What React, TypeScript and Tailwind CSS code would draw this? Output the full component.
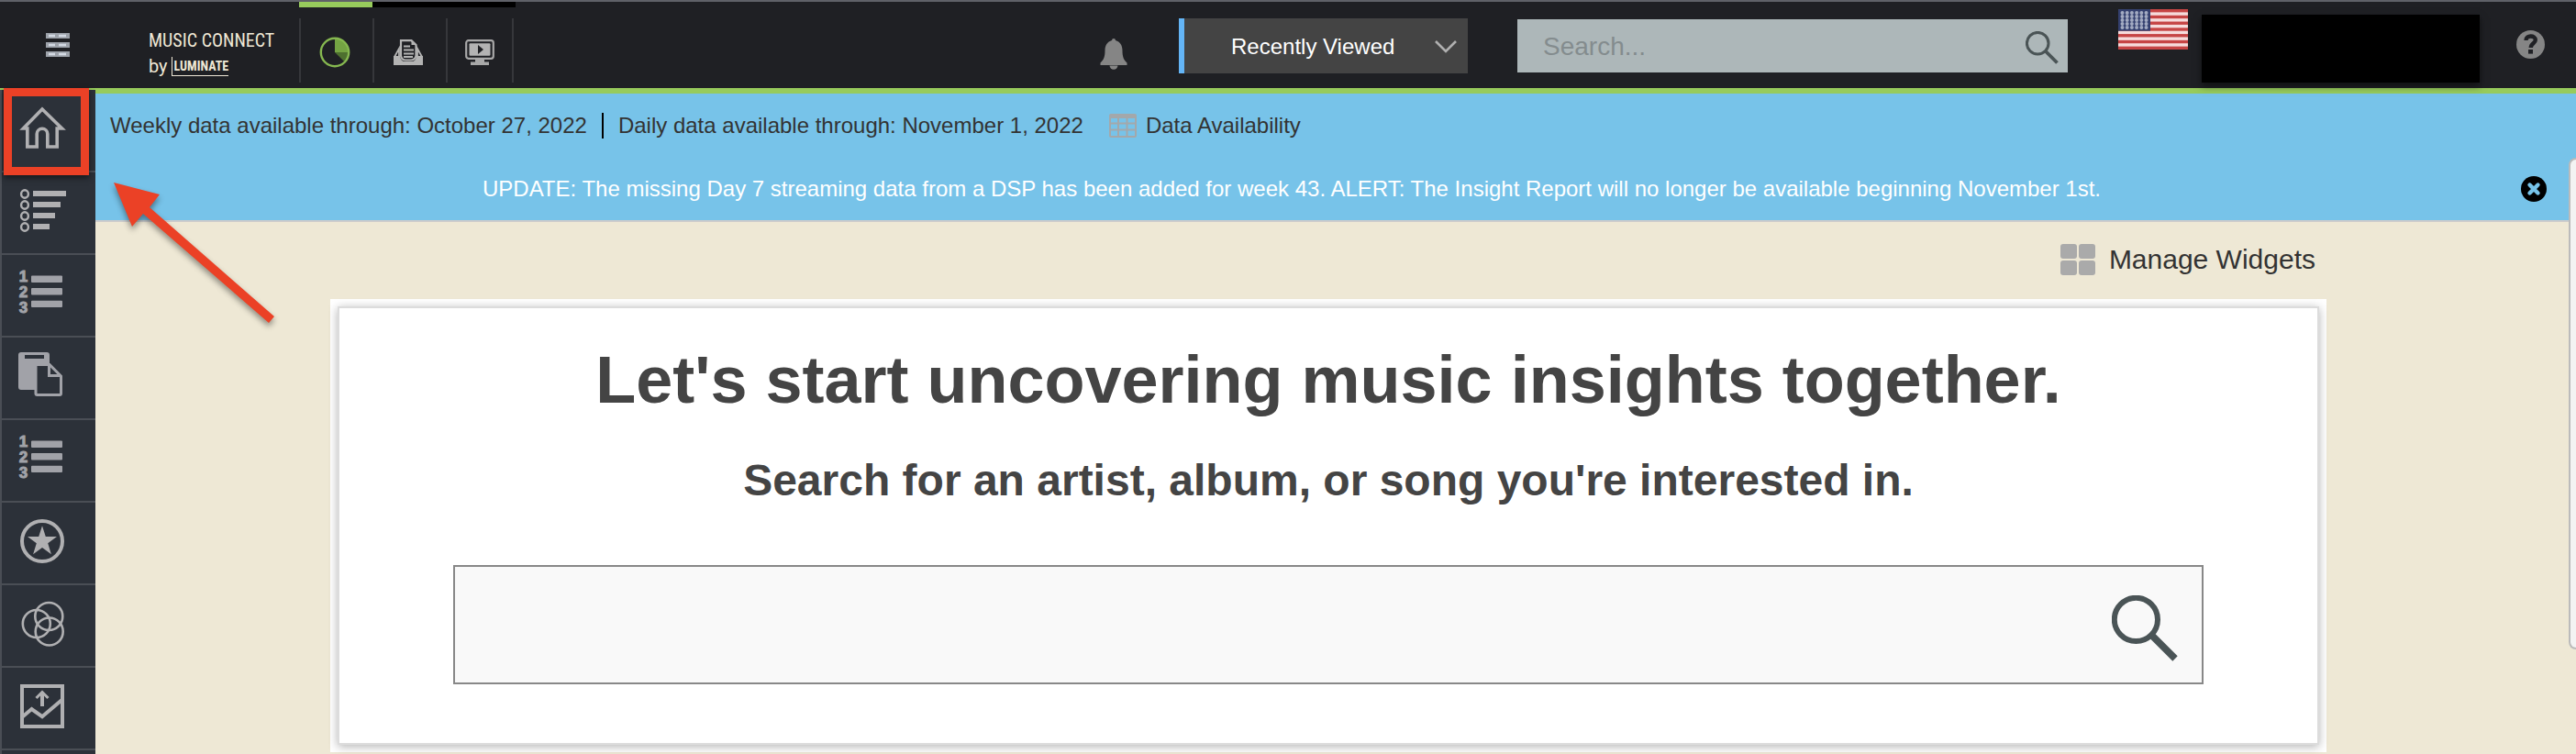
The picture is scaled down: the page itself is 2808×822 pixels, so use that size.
import type { ReactNode } from "react";

const sidebarItems: { label: string; icon: ReactNode }[] = [
  {
    label: "Home",
    icon: (
      <path
        d="M46 21 L25.5 42 H29.8 V62 H40.2 V48 a5.8 5.8 0 0 1 11.6 0 V62 H62.2 V42 H67.5 Z"
        fill="none"
        stroke="#b0b0b2"
        strokeWidth="3.6"
      />
    ),
  },
  {
    label: "Rankings",
    icon: (
      <g>
        {[36, 30, 24, 18].map((width, i) => (
          <g key={width}>
            <ellipse cx="27" cy={23.5 + i * 12} rx="3.9" ry="4.2" fill="none" stroke="#b0b0b2" strokeWidth="2.4" />
            <rect x="36" y={20 + i * 12} width={width} height="6" fill="#b0b0b2" />
          </g>
        ))}
      </g>
    ),
  },
  { label: "Charts", icon: <NumberedList /> },
  {
    label: "Reports",
    icon: (
      <g>
        <path d="M23 16 H51 a3 3 0 0 1 3 3 V30 H40 V57 H23 a3 3 0 0 1 -3 -3 V19 a3 3 0 0 1 3 -3 Z" fill="#a1a2a8" />
        <rect x="27" y="19" width="21" height="4" fill="#2c3139" />
        <path
          d="M39 29.5 H54 L66.5 42 V61 a1.5 1.5 0 0 1 -1.5 1.5 H40.5 a1.5 1.5 0 0 1 -1.5 -1.5 Z M53.5 29.5 V41.5 H66.5"
          fill="#2c3139"
          stroke="#a1a2a8"
          strokeWidth="3"
        />
      </g>
    ),
  },
  { label: "Top Lists", icon: <NumberedList /> },
  {
    label: "Favorites",
    icon: (
      <g>
        <circle cx="46" cy="42" r="22" fill="none" stroke="#b0b0b2" strokeWidth="4" />
        <path
          d="M46 25.3 L49.8 37 H62 L52.2 44.3 L55.9 56.3 L46 49 L36.1 56.3 L39.8 44.3 L30 37 H42.2 Z"
          fill="#b0b0b2"
        />
      </g>
    ),
  },
  {
    label: "Compare",
    icon: (
      <g fill="none" stroke="#b0b0b2" strokeWidth="2.6">
        <circle cx="39.8" cy="42" r="15" />
        <circle cx="53.3" cy="34" r="15" />
        <circle cx="53.7" cy="50.5" r="15" />
      </g>
    ),
  },
  {
    label: "Trends",
    icon: (
      <g fill="none" stroke="#b0b0b2" strokeWidth="4">
        <rect x="24" y="20" width="44" height="44" />
        <path d="M24.5 53.5 L34.5 45 L46 53.2 L67.5 35" />
        <path d="M46 42 V27" />
        <path d="M39.5 33 L46 26.5 L52.5 33" strokeWidth="3" />
      </g>
    ),
  },
];

function NumberedList() {
  return (
    <g fill="#a1a2a8">
      {[1, 2, 3].map((n, i) => (
        <g key={n}>
          <text
            x="25.5"
            y={29 + i * 17}
            textAnchor="middle"
            fontSize="17"
            fontWeight="700"
            stroke="#a1a2a8"
            fontFamily="'Liberation Sans', Arial, sans-serif"
          >
            {n}
          </text>
          <rect x="34" y={22.5 + i * 13.6} width="34" height="7.4" rx="1" />
        </g>
      ))}
    </g>
  );
}

function SearchIcon({ className }: { className: string }) {
  return (
    <svg viewBox="0 0 36 36" className={className} fill="none" stroke="#4a5456" strokeWidth="3">
      <circle cx="13.2" cy="13.2" r="11.8" />
      <path d="M21.5 21.5 L34.5 34.5" strokeWidth="3.8" />
    </svg>
  );
}

function Flag() {
  return (
    <svg viewBox="0 0 76 44" className="h-11 w-[76px]">
      <rect width="76" height="44" fill="#f6dcdc" />
      {[0, 1, 2, 3, 4, 5, 6].map((i) => (
        <rect key={i} y={i * 6.77} width="76" height="3.38" fill="#c64545" />
      ))}
      <rect width="35" height="23.7" fill="#34406f" />
      {[0, 1, 2, 3, 4].map((row) =>
        [0, 1, 2, 3, 4, 5].map((col) => (
          <circle key={`${row}-${col}`} cx={4.5 + col * 5.2} cy={4 + row * 4} r="2" fill="#a3abc2" />
        ))
      )}
    </svg>
  );
}

function Header() {
  return (
    <header className="flex items-start border-t-2 border-b-2 border-t-[#5f6168] border-b-[#97cb5c] bg-[#1f2024] pr-[34px] h-[98px]">
      <button aria-label="Menu" className="mt-[34px] ml-[50px]">
        <svg viewBox="0 0 26 26" className="block size-[26px]">
          {[0, 10, 20].map((y) => (
            <g key={y}>
              <rect y={y} width="26" height="6" fill="#9da2aa" />
              <path d={`M3 ${y + 3} H10 M14 ${y + 3} H22`} stroke="#d3d9e3" strokeWidth="2.5" />
            </g>
          ))}
        </svg>
      </button>

      <a href="#home" className="mt-7 ml-[86px] flex w-[164px] flex-col text-[#efe8d6]">
        <span className="font-['Liberation_Sans_Narrow','Roboto_Condensed',Roboto,sans-serif] text-xl leading-7 whitespace-nowrap">
          MUSIC CONNECT
        </span>
        <span className="flex items-center gap-1 font-['Roboto','Liberation_Sans',sans-serif] text-xl leading-7">
          by
          <span className="border-b border-l border-[#efe8d6] pl-[2px] font-['Liberation_Sans_Narrow','Roboto_Condensed',Roboto,sans-serif] text-sm leading-5 font-bold">
            LUMINATE
          </span>
        </span>
      </a>

      <nav className="flex">
        <a href="#insights" aria-label="Insights" className="w-20 border-t-6 border-[#97cb5c]">
          <span className="mt-3 flex h-[70px] items-center justify-center border-l-2 border-[#36373b] pt-1 pr-1">
            <svg viewBox="0 0 34 34" className="size-[34px]">
              <path d="M17 17 V2 A15 15 0 0 1 32 17 Z" fill="#74a343" />
              <path d="M17 17 H32 A15 15 0 0 1 27.6 27.6 Z" fill="#4e702f" />
              <circle cx="17" cy="17" r="15.2" fill="none" stroke="#86b850" strokeWidth="2.4" />
            </svg>
          </span>
        </a>
        <a href="#inbox" aria-label="Saved reports" className="w-20 border-t-6 border-black">
          <span className="mt-3 flex h-[70px] items-center justify-center border-l-2 border-[#36373b] pt-1 pr-1">
            <svg viewBox="0 0 32 28" className="h-7 w-8">
              <path d="M1 19 L6 10 V19 Z M31 19 L26 10 V19 Z" fill="none" stroke="#b3b3b3" strokeWidth="1.8" />
              <path d="M0 18 H7 Q8 24 12 24 H20 Q24 24 25 18 H32 V28 H0 Z" fill="#b3b3b3" />
              <path d="M8 18 V1.2 H19.5 L24.5 6 V18 Q23 22.5 19 22.5 H13 Q9 22.5 8 18 Z" fill="#1f2024" stroke="#b3b3b3" strokeWidth="2.2" />
              <path d="M19.5 1.2 V6 H24.5 Z" fill="#b3b3b3" />
              <path d="M11 7.5 H18 M11 11.5 H22 M11 15.5 H22 M11 19 H21" stroke="#b3b3b3" strokeWidth="2" />
            </svg>
          </span>
        </a>
        <a href="#videos" aria-label="Video" className="w-[76px] border-t-6 border-black">
          <span className="mt-3 mr-[2px] flex h-[70px] items-center justify-center border-x-2 border-[#36373b] pt-1">
            <svg viewBox="0 0 32 28" className="h-7 w-8">
              <rect x="1.2" y="1.2" width="29.6" height="19.6" rx="2.5" fill="#1f2024" stroke="#a8a8a8" strokeWidth="2.2" />
              <rect x="4.5" y="4.2" width="23" height="13.6" rx="1" fill="#b3b3b3" />
              <path d="M14 6 L20 11 L14 16 Z" fill="#1f2024" />
              <path d="M11 20 H21 V24.5 H26 V28 H6 V24.5 H11 Z" fill="#a8a8a8" />
            </svg>
          </span>
        </a>
      </nav>

      <div className="ml-auto flex items-start">
        <button aria-label="Notifications" className="mt-10 mr-14">
          <svg viewBox="0 0 30 34" className="block h-[34px] w-[30px]" fill="#858585">
            <path d="M15 0 a2 2 0 0 1 2 2 C22 3.5 24.5 7.5 24.5 13 C24.5 20 26 23.5 29.5 26.5 V29 H.5 V26.5 C4 23.5 5.5 20 5.5 13 C5.5 7.5 8 3.5 13 2 a2 2 0 0 1 2 -2 Z" />
            <path d="M10.5 29.5 H19.5 a4.5 4.2 0 0 1 -9 0 Z" />
          </svg>
        </button>

        <div className="relative mt-[18px] mr-[54px]">
          <select
            aria-label="Recently Viewed"
            className="block h-[60px] w-[315px] appearance-none border-l-6 border-[#64b5f6] bg-[#444] pt-[2px] pl-[51px] text-2xl text-white"
          >
            <option>Recently Viewed</option>
          </select>
          <svg
            viewBox="0 0 24 14"
            className="pointer-events-none absolute top-6 right-3 h-[14px] w-6"
            fill="none"
            stroke="#b0b0b0"
            strokeWidth="2.6"
          >
            <path d="M1 1 L12 12 L23 1" />
          </svg>
        </div>

        <div className="relative mt-[19px] mr-[55px]">
          <input
            type="text"
            aria-label="Search"
            placeholder="Search..."
            className="block h-[58px] w-[600px] bg-[#adb7b9] pt-[2px] pr-16 pl-7 text-[28px] text-[#444] placeholder:text-[#848c8e]"
          />
          <button aria-label="Submit search" className="absolute top-[13px] right-[10px]">
            <SearchIcon className="block size-9" />
          </button>
        </div>

        <button aria-label="Country" className="mt-2 mr-[15px]">
          <Flag />
        </button>
        <div className="z-10 mt-[14px] mr-10 h-[74px] w-[303px] bg-black shadow-[0_4px_8px_rgba(0,0,0,0.5)]" />
        <a href="#help" aria-label="Help" className="mt-[31px]">
          <svg viewBox="0 0 31 31" className="block size-[31px]">
            <circle cx="15.5" cy="15.5" r="15.5" fill="#858585" />
            <path d="M10.5 11 C10.5 4.8 20.8 5.2 20.8 10.5 C20.8 14.5 15.8 14.2 15.8 19" fill="none" stroke="#1f2024" strokeWidth="4.4" />
            <rect x="13" y="21" width="5" height="4.6" fill="#1f2024" />
          </svg>
        </a>
      </div>
    </header>
  );
}

function Sidebar() {
  return (
    <nav className="w-[104px] shrink-0 border-l-2 border-[#4a4e55] bg-[#2c3139]">
      {sidebarItems.map((item) => (
        <a
          key={item.label}
          href="#menu"
          aria-label={item.label}
          className="block border-b-2 border-[#4a4e55]"
        >
          <svg viewBox="2 0 102 88" className="block h-[88px] w-full">
            {item.icon}
          </svg>
        </a>
      ))}
    </nav>
  );
}

function NoticeBar() {
  return (
    <section className="border-b-2 border-[#ccc] bg-[#77c3e9] text-2xl">
      <div className="flex h-[70px] items-center pl-4 text-[#333]">
        <span>Weekly data available through: October 27, 2022</span>
        <span className="mx-4 h-7 w-[2px] bg-black" />
        <span>Daily data available through: November 1, 2022</span>
        <a href="#availability" className="ml-7 flex items-center gap-[10px]">
          <svg viewBox="0 0 30 26" className="h-[26px] w-[30px]" fill="none" stroke="#a3a8ab" strokeWidth="2">
            <rect x="1" y="1" width="28" height="24" rx="1" />
            <path d="M1 3 H29" strokeWidth="4" />
            <path d="M1 10.5 H29 M1 17.5 H29 M10 3 V25 M19.5 3 V25" />
          </svg>
          Data Availability
        </a>
      </div>
      <div className="flex h-[68px] items-center text-white">
        <p className="flex-1 text-center">
          UPDATE: The missing Day 7 streaming data from a DSP has been added for week 43. ALERT: The Insight
          Report will no longer be available beginning November 1st.
        </p>
        <button aria-label="Close" className="mr-8 ml-9">
          <svg viewBox="0 0 28 28" className="block size-7">
            <circle cx="14" cy="14" r="14" fill="#000" />
            <path d="M9.5 9.5 L18.5 18.5 M18.5 9.5 L9.5 18.5" stroke="#77c3e9" strokeWidth="4.4" strokeLinecap="round" />
          </svg>
        </button>
      </div>
    </section>
  );
}

function SearchWidget() {
  return (
    <section className="bg-white p-2">
      <div className="border-2 border-[#dcdcdc] bg-white px-31 pt-[38px] pb-16 text-center text-[#444] shadow-[0_2px_10px_rgba(0,0,0,0.3)]">
        <h1 className="text-7xl leading-[80px] font-bold">Let's start uncovering music insights together.</h1>
        <h2 className="mt-[42px] text-5xl leading-[56px] font-bold">
          Search for an artist, album, or song you're interested in.
        </h2>
        <div className="mt-16 flex h-[130px] items-center border-2 border-[#888] bg-[#f9f9f9] pr-[26px]">
          <input
            type="text"
            aria-label="Search for an artist, album, or song"
            className="h-full min-w-0 flex-1 px-6 text-5xl outline-none"
          />
          <button aria-label="Search" className="pt-2">
            <SearchIcon className="block size-[72px]" />
          </button>
        </div>
      </div>
    </section>
  );
}

// Red box and arrow pointing at the home button
function HomeCallout() {
  return (
    <>
      <div className="pointer-events-none absolute top-24 left-1 h-[95px] w-[93px] border-9 border-[#eb4126] shadow-[0_3px_6px_rgba(0,0,0,0.5)]" />
      <svg
        viewBox="0 0 200 170"
        className="pointer-events-none absolute top-[190px] left-[110px] h-[170px] w-[200px] drop-shadow-[0_4px_3px_rgba(0,0,0,0.4)]"
      >
        <path d="M14 9 L64 22 L53 36 L189 155 L183 162 L46 43 L34 57 Z" fill="#eb4126" />
      </svg>
    </>
  );
}

export default function App() {
  return (
    <div className="relative flex min-h-screen flex-col overflow-hidden font-['Liberation_Sans',Arial,sans-serif]">
      <Header />
      <div className="flex flex-1">
        <Sidebar />
        <main className="min-w-0 flex-1 border-t-4 border-[#97cb5c] bg-[#eee8d5]">
          <NoticeBar />
          <div className="pr-[272px] pl-64">
            <div className="flex h-21 items-center justify-end pr-3 pb-[2px]">
              <button className="flex items-center gap-[15px] text-3xl text-[#333]">
                <svg viewBox="0 0 38 34" className="h-[34px] w-[38px]" fill="#aaa">
                  <rect width="18" height="16" rx="3" />
                  <rect x="20" width="18" height="16" rx="3" />
                  <rect y="18" width="18" height="16" rx="3" />
                  <rect x="20" y="18" width="18" height="16" rx="3" />
                </svg>
                Manage Widgets
              </button>
            </div>
            <SearchWidget />
          </div>
        </main>
      </div>
      <HomeCallout />
      <div className="absolute top-[172px] right-0 h-[536px] w-2 rounded-l-lg border-y-2 border-l-2 border-[#bbb] bg-[#f3f3f3]" />
    </div>
  );
}
